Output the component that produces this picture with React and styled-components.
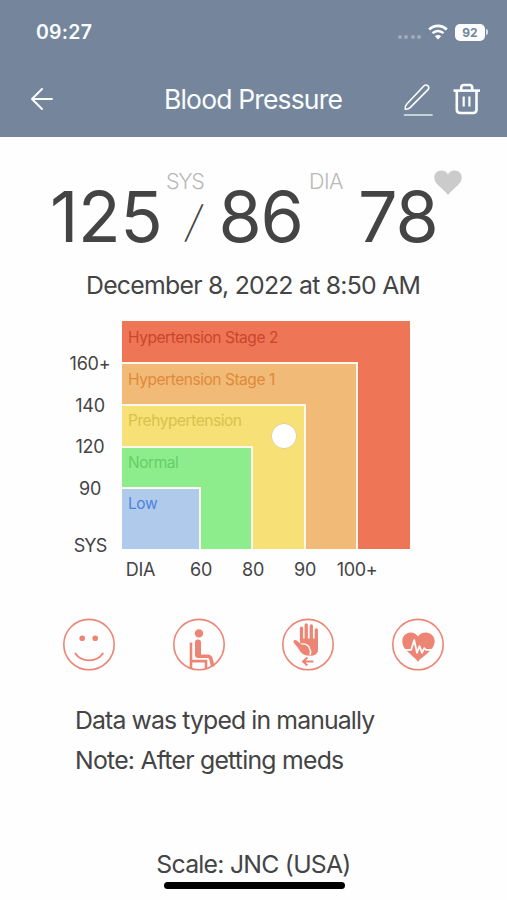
import React from "react";
import styled, { createGlobalStyle } from "styled-components";

const Global = createGlobalStyle`
  *, *::before, *::after { box-sizing: border-box; }
  body { margin: 0; background: #fefefe; }
`;

const Screen = styled.div`
  width: 507px;
  height: 900px;
  overflow: hidden;
  display: flex;
  flex-direction: column;
  background: #fefefe;
  color: #444445;
  font-family: Inter, "Liberation Sans", sans-serif;
`;

const Header = styled.header`
  height: 137px;
  flex: none;
  background: #75869c;
  color: #fbfdff;
`;

const StatusBar = styled.div`
  height: 64px;
  padding: 0 19px 0 36px;
  display: flex;
  align-items: center;
`;

const Clock = styled.span`
  flex: 1;
  font-size: 19.5px;
  font-weight: 600;
  letter-spacing: 0.25px;
`;

const Signal = styled.div`
  display: flex;
  gap: 2.3px;
  padding-top: 10px;
  margin-right: 7px;
`;

const SignalDot = styled.i`
  width: 4px;
  height: 4px;
  border-radius: 50%;
  background: #a0acbb;
`;

const Battery = styled.div`
  width: 30px;
  height: 17px;
  margin-left: 7px;
  border-radius: 5px;
  background: #fbfdff;
  color: #75869c;
  font-size: 12px;
  font-weight: 700;
  line-height: 17px;
  text-align: center;
`;

const BatteryTip = styled.i`
  width: 2px;
  height: 6px;
  margin-left: 1px;
  border-radius: 0 2px 2px 0;
  background: #d5dce4;
`;

const NavBar = styled.nav`
  height: 70px;
  padding: 0 25px 0 30px;
  display: grid;
  grid-template-columns: 24px 1fr 32px 30px;
  column-gap: 18px;
  align-items: center;
`;

const Title = styled.h1`
  margin: 0;
  padding-left: 92px;
  font-size: 26.5px;
  font-weight: 400;
  line-height: 34px;
  letter-spacing: -0.84px;
  white-space: nowrap;
`;

const Reading = styled.section`
  height: 112px;
  margin: 21px 0 0 50px;
  display: grid;
  grid-template-columns: 112px 56.5px 87px 52.5px 76px 40px;
  align-items: start;
`;

const Figure = styled.span`
  font-size: 70px;
  line-height: 84px;
  padding-top: 17px;
  letter-spacing: ${(p) => p.$spacing}px;
  white-space: nowrap;
`;

const UnitColumn = styled.div`
  display: flex;
  flex-direction: column;
  padding-top: 10px;
  padding-left: ${(p) => p.$inset}px;
`;

const Unit = styled.span`
  height: 26px;
  font-size: 21.5px;
  font-weight: 300;
  line-height: 26px;
  letter-spacing: ${(p) => p.$spacing}px;
  color: #b9b9b9;
`;

const Divider = styled.span`
  margin-left: 21px;
  width: 24px;
  font-size: 43px;
  font-weight: 200;
  line-height: 54px;
  transform: skewX(-11deg);
`;

const HeartBox = styled.div`
  padding-top: 12px;
  display: flex;
`;

const DateLine = styled.div`
  height: 51px;
  padding-left: 86px;
  font-size: 24.8px;
  line-height: 30px;
  letter-spacing: -0.74px;
  white-space: nowrap;
`;

const Chart = styled.section`
  height: 277px;
  margin-left: 58px;
  display: grid;
  grid-template-columns: 64px 288px;
  grid-template-rows: 228px 49px;
`;

const SysAxis = styled.div`
  padding-top: 22px;
  display: flex;
  flex-direction: column;
  font-size: 18px;
  line-height: 41.6px;
  letter-spacing: -0.2px;
  text-align: center;
`;

const AxisTick = styled.span`
  height: 41.6px;
  &:last-child { margin-top: 15.5px; letter-spacing: -0.9px; }
`;

const DiaAxis = styled.div`
  grid-column: 2;
  margin-left: -16px;
  display: grid;
  grid-template-columns: 69px 52px 52px 52px 52px;
  font-size: 18px;
  line-height: 41px;
  letter-spacing: -0.3px;
  text-align: center;
`;

const Plot = styled.div`
  position: relative;
  width: 288px;
  height: 228px;
`;

const Zone = styled.div`
  width: ${(p) => p.$w}px;
  height: ${(p) => p.$h}px;
  display: flex;
  flex-direction: column;
  justify-content: space-between;
  background: ${(p) => p.$fill};
  border: solid #fdf8ec;
  border-width: ${(p) => (p.$outer ? "0" : "2px 2px 0 0")};
`;

const ZoneName = styled.span`
  height: 32px;
  flex: none;
  padding-left: 6px;
  padding-top: ${(p) => p.$drop}px;
  font-size: 15.5px;
  line-height: 30px;
  letter-spacing: -0.45px;
  white-space: nowrap;
  color: ${(p) => p.$ink};
`;

const Marker = styled.i`
  position: absolute;
  left: 150px;
  top: 102.6px;
  width: 24px;
  height: 24px;
  border-radius: 50%;
  background: #fff;
  box-shadow: 0 0 0 0.5px #c9c7b2;
`;

const TagRow = styled.section`
  height: 54px;
  margin: 20px 62px 0 62px;
  display: flex;
  justify-content: space-between;
`;

const Notes = styled.section`
  margin: 28px 0 0 75px;
  height: 146px;
`;

const NoteLine = styled.p`
  margin: 0;
  font-size: 24.8px;
  line-height: 40px;
  letter-spacing: ${(p) => p.$spacing}px;
  white-space: nowrap;
`;

const Scale = styled.footer`
  height: 36px;
  text-align: center;
  font-size: 24.8px;
  line-height: 37px;
  letter-spacing: -0.75px;
`;

const HomeBar = styled.div`
  width: 181px;
  height: 7px;
  margin: 0 0 0 164px;
  border-radius: 4px;
  background: #000;
`;

const CORAL = "#ed8574";

const zones = [
  { name: "Hypertension Stage 2", w: 288, h: 228, fill: "#ee7657", ink: "#cb452b", drop: 2 },
  { name: "Hypertension Stage 1", w: 235.5, h: 187, fill: "#f1bb77", ink: "#df893b", drop: 1 },
  { name: "Prehypertension", w: 183.5, h: 145, fill: "#f7e075", ink: "#d8c24f", drop: 0 },
  { name: "Normal", w: 131, h: 103, fill: "#8ded8d", ink: "#66cf66", drop: 0 },
  { name: "Low", w: 79, h: 62, fill: "#b0caec", ink: "#4b83dc", drop: 0 },
];

function ZoneStack({ level = 0 }) {
  const z = zones[level];
  return (
    <Zone $w={z.w} $h={z.h} $fill={z.fill} $outer={level === 0}>
      <ZoneName $ink={z.ink} $drop={z.drop}>{z.name}</ZoneName>
      {level < zones.length - 1 && <ZoneStack level={level + 1} />}
    </Zone>
  );
}

function WifiIcon() {
  return (
    <svg width="20" height="16" viewBox="0 0 20 16" fill="none" stroke="#fbfdff">
      <path d="M1.2 5.4C6.2.7 13.8.7 18.8 5.4" strokeWidth="2.7" />
      <path d="M4.5 9.1C7.7 6.2 12.3 6.2 15.5 9.1" strokeWidth="2.6" />
      <path d="M10 15.5 6.8 12.3C8.6 10.6 11.4 10.6 13.2 12.3Z" fill="#fbfdff" stroke="none" />
    </svg>
  );
}

function BackIcon() {
  return (
    <svg width="24" height="24" viewBox="0 0 24 24" fill="none" stroke="#fbfdff" strokeWidth="2" strokeLinecap="round" strokeLinejoin="round">
      <path d="M22 12H2M12 2 2 12l10 10" />
    </svg>
  );
}

function EditIcon() {
  return (
    <svg width="32" height="34" viewBox="0 0 32 34" fill="none" stroke="#fbfdff" strokeWidth="1.6" strokeLinecap="round" strokeLinejoin="round">
      <path d="M3.2 27.2C2.9 24.9 3.4 23.6 4.8 22L21.8 4C24.6 1.4 28.6 4.8 26 7.6L8.4 25.4C6.8 26.9 5.4 27.6 3.2 27.2Z" />
      <path d="M2.5 33H30" stroke="#dceee9" strokeWidth="1.7" />
    </svg>
  );
}

function TrashIcon() {
  return (
    <svg width="30" height="32" viewBox="0 0 30 32" fill="none" stroke="#fbfdff" strokeWidth="2.6" strokeLinejoin="round">
      <path d="M1.5 7.6H28" />
      <path d="M9.2 7V4.7C9.2 3 10.2 2 12 2H17.5C19.2 2 20.2 3 20.2 4.7V7" />
      <path d="M4.8 8V26.5C4.8 28.8 6 30 8.4 30H21C23.3 30 24.5 28.8 24.5 26.5V8" />
      <path d="M11.7 13.5V23.5M17.4 13.5V23.5" strokeWidth="2.2" />
    </svg>
  );
}

function HeartIcon() {
  return (
    <svg width="28" height="26" viewBox="0 0 28 26" fill="#cbcbcb">
      <path d="M14 25C12 22.3 8 19 4.5 15.5 1.5 12.5.3 10.5.3 7.5.3 3.5 3.2.5 7.2.5 10.3.5 12.7 2 14 4.5 15.3 2 17.7.5 20.8.5 24.8.5 27.7 3.5 27.7 7.5 27.7 10.5 26.5 12.5 23.5 15.5 20 19 16 22.3 14 25Z" />
    </svg>
  );
}

function Tag({ children }) {
  return (
    <svg width="54" height="54" viewBox="0 -0.6 54 54" fill="none" stroke={CORAL} strokeLinecap="round" strokeLinejoin="round">
      <circle cx="27" cy="26" r="25.2" strokeWidth="1.6" />
      {children}
    </svg>
  );
}

function MoodTag() {
  return (
    <Tag>
      <circle cx="20.2" cy="19.6" r="2.8" fill={CORAL} stroke="none" />
      <circle cx="33.2" cy="19.6" r="2.8" fill={CORAL} stroke="none" />
      <path d="M13.5 35C19 44 35 44 40.8 35" strokeWidth="1.9" />
    </Tag>
  );
}

function PostureTag() {
  return (
    <Tag>
      <circle cx="27" cy="14.8" r="4.2" fill={CORAL} stroke="none" />
      <path d="M26 24V36.5" strokeWidth="6" />
      <path d="M26 37.7H35.5C37.5 37.7 38.5 38.7 39 40.5L40.8 48" strokeWidth="3.6" strokeLinecap="butt" />
      <path d="M19 24V50.2M19.5 42.5H34V49.5" strokeWidth="2.6" strokeLinecap="butt" strokeLinejoin="miter" />
    </Tag>
  );
}

function HandTag() {
  return (
    <Tag>
      <path d="M20.5 22.5V9.5M25.2 22V6.3M30.3 22V7.3M35.3 23V11.3" strokeWidth="3.3" />
      <path d="M18.8 20H37V31C37 35.8 33.5 37.2 29 37.2 22 37.2 19.5 34 17 29.5L12.8 24.2C11.5 22 13.8 20.3 15.8 22L19.5 25.2Z" fill={CORAL} stroke="none" />
      <path d="M20.5 25.3C25 25 28.5 27 28.6 30.3 30 32 30.2 33.3 29.2 36" stroke="#fefefe" strokeWidth="1.4" />
      <path d="M32.5 42.9H22M26.4 38.8 22 42.9 26.4 47" strokeWidth="2" strokeLinecap="butt" />
    </Tag>
  );
}

function PulseTag() {
  return (
    <Tag>
      <path d="M27 43.2C24.7 40 20.5 37 16.5 33 12.8 29.3 11.3 26.5 11.3 22.6 11.3 17.5 15 14 19.5 14 23 14 25.7 15.7 27 18 28.5 15.3 31.2 13.8 34.8 13.8 39.5 13.8 43.7 17.5 43.7 22.5 43.7 26.5 42 29.3 38 33.2 34.2 37 29.5 40 27 43.2Z" fill={CORAL} stroke="none" />
      <path d="M11 31.2H20.2L23.2 21.5 26 34.2 28.5 27.5 31 34.2 33.2 29.5 35 31.2H44" stroke="#fefefe" strokeWidth="1.8" />
    </Tag>
  );
}

export default function App() {
  return (
    <Screen>
      <Global />
      <Header>
        <StatusBar>
          <Clock>09:27</Clock>
          <Signal>
            <SignalDot /><SignalDot /><SignalDot /><SignalDot />
          </Signal>
          <WifiIcon />
          <Battery>92</Battery>
          <BatteryTip />
        </StatusBar>
        <NavBar>
          <BackIcon />
          <Title>Blood Pressure</Title>
          <EditIcon />
          <TrashIcon />
        </NavBar>
      </Header>
      <Reading>
        <Figure $spacing={-0.4}>125</Figure>
        <UnitColumn $inset={4}>
          <Unit $spacing={-1.3}>SYS</Unit>
          <Divider>/</Divider>
        </UnitColumn>
        <Figure $spacing={-1.2}>86</Figure>
        <UnitColumn $inset={3.5}>
          <Unit $spacing={-0.5}>DIA</Unit>
        </UnitColumn>
        <Figure $spacing={-1.2}>78</Figure>
        <HeartBox><HeartIcon /></HeartBox>
      </Reading>
      <DateLine>December 8, 2022 at 8:50 AM</DateLine>
      <Chart>
        <SysAxis>
          {["160+", "140", "120", "90", "SYS"].map((t) => <AxisTick key={t}>{t}</AxisTick>)}
        </SysAxis>
        <Plot>
          <ZoneStack />
          <Marker />
        </Plot>
        <DiaAxis>
          {["DIA", "60", "80", "90", "100+"].map((t) => <span key={t}>{t}</span>)}
        </DiaAxis>
      </Chart>
      <TagRow>
        <MoodTag />
        <PostureTag />
        <HandTag />
        <PulseTag />
      </TagRow>
      <Notes>
        <NoteLine $spacing={-0.88}>Data was typed in manually</NoteLine>
        <NoteLine $spacing={-0.76}>Note: After getting meds</NoteLine>
      </Notes>
      <Scale>Scale: JNC (USA)</Scale>
      <HomeBar />
    </Screen>
  );
}
